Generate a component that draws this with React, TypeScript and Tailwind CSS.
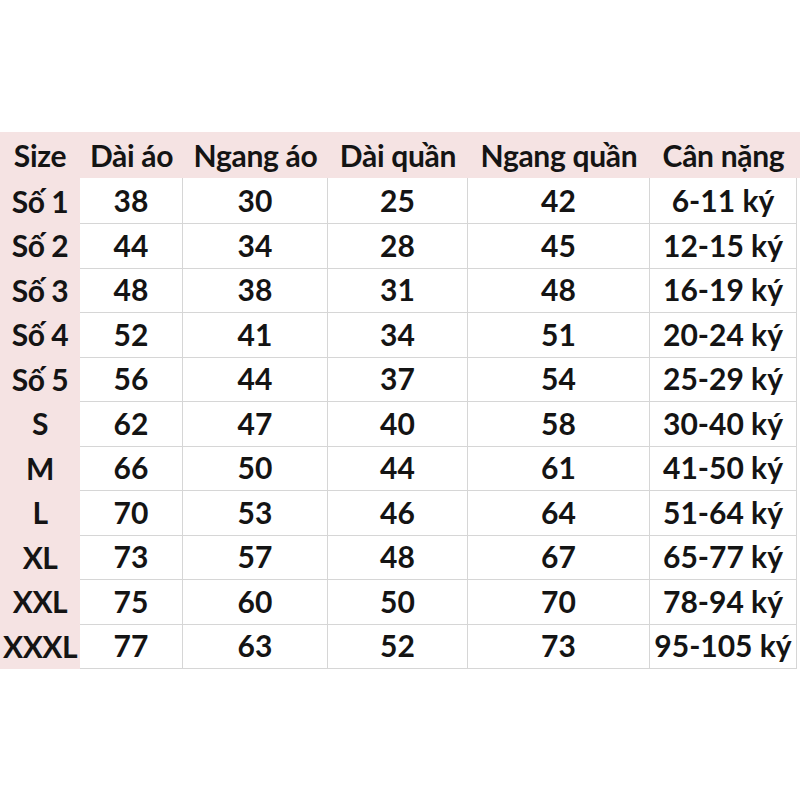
import React from "react";

const headers = ["Size", "Dài áo", "Ngang áo", "Dài quần", "Ngang quần", "Cân nặng"];

const rows: string[][] = [
  ["Số 1", "38", "30", "25", "42", "6-11 ký"],
  ["Số 2", "44", "34", "28", "45", "12-15 ký"],
  ["Số 3", "48", "38", "31", "48", "16-19 ký"],
  ["Số 4", "52", "41", "34", "51", "20-24 ký"],
  ["Số 5", "56", "44", "37", "54", "25-29 ký"],
  ["S", "62", "47", "40", "58", "30-40 ký"],
  ["M", "66", "50", "44", "61", "41-50 ký"],
  ["L", "70", "53", "46", "64", "51-64 ký"],
  ["XL", "73", "57", "48", "67", "65-77 ký"],
  ["XXL", "75", "60", "50", "70", "78-94 ký"],
  ["XXXL", "77", "63", "52", "73", "95-105 ký"],
];

const cols = "grid grid-cols-[80px_103px_145px_140px_182px_147px]";

const App: React.FC = () => {
  return (
    <div
      className="w-[800px] h-[800px] bg-white pt-[132px] text-[#141414] font-bold"
      style={{ fontFamily: "Lato, 'Open Sans', sans-serif" }}
    >
      {/* header row */}
      <div className={`${cols} h-[46px] bg-[#f5e3e3] items-center text-[30px] tracking-[-0.3px]`}>
        {headers.map((h) => (
          <div key={h} className="text-center whitespace-nowrap">
            {h}
          </div>
        ))}
      </div>

      {/* body */}
      <div>
        {rows.map((r) => (
          <div key={r[0]} className={`${cols} h-[44.5px] text-[30px]`}>
            {r.map((c, i) => (
              <div
                key={i}
                className={
                  i === 0
                    ? "bg-[#f5e3e3] flex items-center justify-center whitespace-nowrap tracking-[-0.5px]"
                    : "flex items-center justify-center whitespace-nowrap border-r border-b border-[#d6d6d6]"
                }
              >
                {c}
              </div>
            ))}
          </div>
        ))}
      </div>
    </div>
  );
};

export default App;
